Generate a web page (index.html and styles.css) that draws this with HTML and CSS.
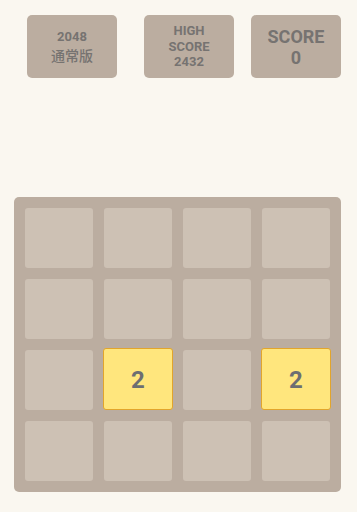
FILE: index.html
```html
<!DOCTYPE html>
<html>
<head>
<meta charset="utf-8">
<link rel="stylesheet" href="styles.css">
</head>
<body>
<div class="header">
  <div class="box box-title"><div class="l1">2048</div><div class="l2">通常版</div></div>
  <div class="box box-high"><div>HIGH</div><div>SCORE</div><div>2432</div></div>
  <div class="box box-score"><div>SCORE</div><div>0</div></div>
</div>
<div class="board">
  <div class="tile"></div><div class="tile"></div><div class="tile"></div><div class="tile"></div>
  <div class="tile"></div><div class="tile"></div><div class="tile"></div><div class="tile"></div>
  <div class="tile"></div><div class="tile t2">2</div><div class="tile"></div><div class="tile t2">2</div>
  <div class="tile"></div><div class="tile"></div><div class="tile"></div><div class="tile"></div>
</div>
</body>
</html>
```
FILE: styles.css
```css
html, body {
  margin: 0;
  padding: 0;
  background: #faf7f0;
  font-family: Roboto, "Noto Sans CJK SC", sans-serif;
}
.header {
  display: flex;
  padding: 15px 0 0 27px;
  height: 63px;
}
.box {
  width: 90px;
  height: 63px;
  background: #bbada0;
  border-radius: 5px;
  color: #75737180;
  color: #767371;
  font-weight: 700;
  display: flex;
  flex-direction: column;
  align-items: center;
  justify-content: center;
  text-align: center;
}
.box-title { margin-right: 27px; }
.box-title .l1 { font-size: 13px; line-height: 18px; }
.box-title .l2 { font-size: 14px; line-height: 19px; font-family: "Noto Sans CJK SC", sans-serif; font-weight: 500; }
.box-high { margin-right: 17px; font-size: 13px; line-height: 15.5px; }
.box-score { font-size: 18px; line-height: 21px; }
.board {
  margin: 119px 0 0 14px;
  width: 305px;
  padding: 11px;
  background: #bbada0;
  border-radius: 5px;
  display: grid;
  grid-template-columns: repeat(4, 68px);
  grid-auto-rows: 60px;
  gap: 11px;
}
.tile {
  background: #cdc1b4;
  border-radius: 3px;
}
.t2 {
  margin: -2px -1px 0 -1px;
  background: #ffe67d;
  border: 1px solid #e2a52c;
  color: #6d6e72;
  font-weight: 700;
  font-size: 24px;
  display: flex;
  align-items: center;
  justify-content: center;
  padding-top: 2px;
  box-sizing: border-box;
}
```
